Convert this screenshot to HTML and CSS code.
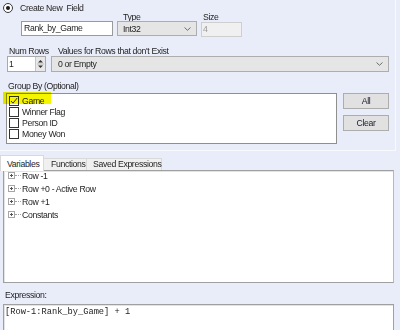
FILE: index.html
```html
<!DOCTYPE html>
<html>
<head>
<meta charset="utf-8">
<link rel="stylesheet" href="styles.css">
</head>
<body>
<div class="app">
  <section class="group">
    <div class="radio-row">
      <span class="radio"><span class="dot"></span></span>
      <span class="radio-text">Create New&nbsp; Field</span>
    </div>
    <div class="field-row">
      <div class="col col-name">
        <div class="textbox name-box">Rank_by_Game</div>
      </div>
      <div class="col col-type">
        <div class="lbl lbl-type">Type</div>
        <div class="combo type-combo"><span>Int32</span>
          <svg class="chev" width="7" height="4" viewBox="0 0 7 4"><path d="M0.5 0.5 L3.5 3.3 L6.5 0.5" fill="none" stroke="#606060" stroke-width="0.9"/></svg>
        </div>
      </div>
      <div class="col col-size">
        <div class="lbl lbl-size">Size</div>
        <div class="textbox size-box">4</div>
      </div>
    </div>
    <div class="rows-row">
      <div class="col col-num">
        <div class="lbl lbl-num">Num Rows</div>
        <div class="spinner">
          <div class="spin-text">1</div>
          <div class="spin-btns">
            <svg width="9" height="14" viewBox="0 0 9 14"><path d="M2 5.5 L4.5 3 L7 5.5 Z" fill="#333"/><line x1="1" y1="7" x2="8" y2="7" stroke="#bdbdbd" stroke-width="1"/><path d="M2 8.5 L4.5 11 L7 8.5 Z" fill="#333"/></svg>
          </div>
        </div>
      </div>
      <div class="col col-values">
        <div class="lbl lbl-values">Values for Rows that don't Exist</div>
        <div class="combo values-combo"><span>0 or Empty</span>
          <svg class="chev" width="7" height="4" viewBox="0 0 7 4"><path d="M0.5 0.5 L3.5 3.3 L6.5 0.5" fill="none" stroke="#606060" stroke-width="0.9"/></svg>
        </div>
      </div>
    </div>
    <div class="groupby">
      <div class="lbl lbl-group">Group By (Optional)</div>
      <div class="gb-body">
        <div class="list">
          <div class="highlight"></div>
          <div class="item"><span class="check checked"><svg width="8" height="8" viewBox="0 0 8 8"><path d="M1 4 L3 6.2 L7.2 1" fill="none" stroke="#222" stroke-width="0.9"/></svg></span><span>Game</span></div>
          <div class="item"><span class="check"></span><span>Winner Flag</span></div>
          <div class="item"><span class="check"></span><span>Person ID</span></div>
          <div class="item"><span class="check"></span><span>Money Won</span></div>
        </div>
        <div class="btns">
          <div class="btn">All</div>
          <div class="btn">Clear</div>
        </div>
      </div>
    </div>
  </section>

  <div class="tabs">
    <div class="tab active">Variables</div>
    <div class="tab tab-fn">Functions</div>
    <div class="tab tab-saved">Saved Expressions</div>
  </div>
  <div class="tabpanel">
    <ul class="tree">
      <li><span class="exp"></span><span class="dots"></span><span>Row -1</span></li>
      <li><span class="exp"></span><span class="dots"></span><span>Row +0 - Active Row</span></li>
      <li><span class="exp"></span><span class="dots"></span><span>Row +1</span></li>
      <li><span class="exp"></span><span class="dots"></span><span>Constants</span></li>
    </ul>
  </div>
  <div class="expr-label">Expression:</div>
  <div class="expr-box">[Row-1:Rank_by_Game] + 1</div>
</div>
</body>
</html>
```

FILE: styles.css
```css
* { box-sizing: border-box; }
html, body { margin: 0; padding: 0; }
body {
  width: 400px;
  height: 330px;
  overflow: hidden;
  background: #e9edf9;
  font-family: "Liberation Sans", Arial, sans-serif;
  font-size: 8.7px;
  letter-spacing: -0.35px;
  color: #1e1e1e;
}
.app { width: 400px; height: 330px; }

.group {
  width: 396px;
  height: 151px;
  border-right: 1px solid #f8f9fd;
  border-bottom: 1px solid #f8f9fd;
}

.radio-row {
  display: flex;
  align-items: center;
  height: 13px;
  padding: 3px 0 0 3px;
}
.radio {
  width: 10px; height: 10px;
  border: 1px solid #3a3a3a;
  border-radius: 50%;
  background: #fff;
  display: flex; align-items: center; justify-content: center;
}
.radio .dot { width: 4px; height: 4px; border-radius: 50%; background: #1a1a1a; }
.radio-text { margin-left: 7px; line-height: 10px; }

.field-row { display: flex; margin-left: 21px; }
.col { display: flex; flex-direction: column; }
.col-name { width: 92px; padding-top: 8px; }
.col-type { width: 80px; margin-left: 4px; }
.col-size { width: 41px; margin-left: 4px; }
.lbl { line-height: 8px; height: 8px; white-space: nowrap; }
.lbl-type { padding-left: 6px; }
.lbl-size { padding-left: 2px; height: 9px; line-height: 9px; }

.textbox {
  height: 15px;
  line-height: 13px;
  border: 1px solid #a9a9a9;
  background: #fff;
  padding-left: 2px;
}
.name-box { border-color: #9a9a9a; }
.size-box { background: #f0f0f0; border-color: #cfcfcf; color: #9a9a9a; padding-left: 1px; }

.combo {
  height: 15px;
  border: 1px solid #adadad;
  background: #e5e5e5;
  display: flex; align-items: center; justify-content: space-between;
  padding: 0 5px 0 5px;
}
.values-combo { height: 16px; padding-left: 6px; }

.rows-row { display: flex; margin-top: 9px; }
.rows-row .lbl { height: 10px; line-height: 10px; }
.col-num { width: 39px; margin-left: 7px; }
.lbl-num { padding-left: 2px; }
.col-values { width: 338px; margin-left: 5px; }
.lbl-values { padding-left: 7px; }

.spinner {
  height: 16px;
  display: flex;
  border: 1px solid #a9a9a9;
  background: #fff;
}
.spin-text { flex: 1; padding-left: 1px; line-height: 14px; }
.spin-btns {
  width: 10px;
  background: #e8e8e8;
  border-left: 1px solid #c4c4c4;
  display: flex; align-items: center; justify-content: center;
}

.groupby { margin-top: 9px; }
.lbl-group { height: 10px; line-height: 10px; padding-left: 8px; }
.gb-body { display: flex; margin-left: 6px; margin-top: 2px; }
.list {
  position: relative;
  width: 331px; height: 51px;
  border: 1px solid #8f8f8f;
  background: #fff;
  padding: 1px 0 0 2px;
}
.highlight {
  position: absolute;
  left: -4px; top: -2px;
  width: 48px; height: 12px;
  background: #f5f500;
  mix-blend-mode: multiply;
}
.item { display: flex; align-items: center; height: 11px; white-space: nowrap; }
.check {
  width: 10px; height: 10px;
  border: 1px solid #333;
  background: #fff;
  margin-right: 3px;
  display: flex; align-items: center; justify-content: center;
}
.btns { display: flex; flex-direction: column; gap: 6px; margin-left: 6px; }
.btn {
  width: 46px; height: 16px;
  border: 1px solid #adadad;
  background: #e1e1e1;
  text-align: center;
  line-height: 14px;
  color: #1b1b2e;
}

.tabs {
  display: flex;
  align-items: flex-end;
  height: 19px;
  padding-top: 4px;
}
.tab {
  height: 12px;
  line-height: 11px;
  border: 1px solid #d9d9d9;
  border-bottom: none;
  background: #f0f0f0;
  padding-left: 6px;
  margin-left: -1px;
  white-space: nowrap;
}
.tab.active {
  width: 44px;
  height: 16px;
  line-height: 16px;
  background: #fff;
  margin-left: 0;
  margin-bottom: -1px;
  padding-left: 6px;
  position: relative;
  z-index: 1;
  border-color: #d9d9d9;
}
.tab-fn { width: 44px; padding-left: 7px; }
.tab-saved { width: 76px; padding-left: 6px; }

.tabpanel {
  margin-left: 3px;
  width: 391px;
  height: 113px;
  border: 1px solid #a0a0a0;
  border-right-color: #b8b8b8;
  box-shadow: inset 1px 1px 0 #e3e3e3;
  background: #fff;
}
.tree { list-style: none; margin: -2px 0 0 0; padding: 0 0 0 4px; }
.tree li { display: flex; align-items: center; height: 13px; white-space: nowrap; }
.exp {
  width: 7px; height: 7px;
  border: 1px solid #a6a6a6;
  background: linear-gradient(#555, #555) center / 3px 1px no-repeat,
              linear-gradient(#555, #555) center / 1px 3px no-repeat, #fff;
}
.dots {
  width: 6px; height: 1px;
  border-top: 1px dotted #a0a0a0;
  margin: 0 1px 0 0;
}

.expr-label { height: 21px; padding-top: 4px; line-height: 17px; padding-left: 5px; }
.expr-box {
  margin-left: 3px;
  width: 391px;
  height: 40px;
  border: 1px solid #a0a0a0;
  box-shadow: inset 1px 1px 0 #e3e3e3;
  background: #fff;
  font-family: "Liberation Mono", "Courier New", monospace;
  font-size: 8.7px;
  letter-spacing: 0;
  padding: 2px 0 0 1px;
  line-height: 10px;
  color: #222;
}
```
